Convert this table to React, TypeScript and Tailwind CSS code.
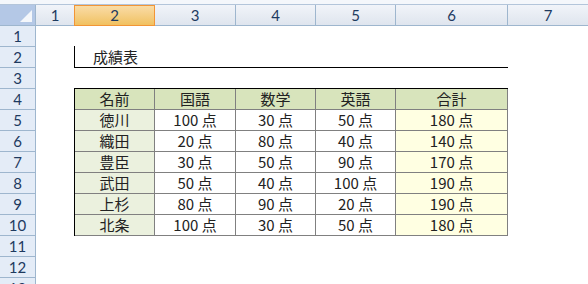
import React from "react";

const colHeaders = [
  { label: "1", w: "w-[38px]", sel: false, br: false },
  { label: "2", w: "w-[81px]", sel: true, br: false },
  { label: "3", w: "w-[81px]", sel: false, br: true },
  { label: "4", w: "w-[80px]", sel: false, br: true },
  { label: "5", w: "w-[80px]", sel: false, br: true },
  { label: "6", w: "w-[112px]", sel: false, br: true },
];

const rows = [
  ["徳川", "100 点", "30 点", "50 点", "180 点"],
  ["織田", "20 点", "80 点", "40 点", "140 点"],
  ["豊臣", "30 点", "50 点", "90 点", "170 点"],
  ["武田", "50 点", "40 点", "100 点", "190 点"],
  ["上杉", "80 点", "90 点", "20 点", "190 点"],
  ["北条", "100 点", "30 点", "50 点", "180 点"],
];

const widths = ["w-[80px]", "w-[81px]", "w-[80px]", "w-[80px]", "w-[112px]"];

export default function App() {
  const jp = { fontFamily: '"Noto Sans CJK JP", "Noto Sans", sans-serif' };
  const hdr = { fontFamily: 'Lato, "Noto Sans", sans-serif' };
  return (
    <div className="w-[588px] h-[284px] overflow-hidden bg-white">
      <div className="h-[5px] bg-[#f4f7fb] border-b border-[#b3c5da]" />
      <div className="flex h-[21px]" style={hdr}>
        <div className="w-[36px] h-[21px] border-r border-b border-[#9eb6ce] bg-[#b4c8e6] flex items-end justify-end pr-[3px] pb-[3px]">
          <svg width="12" height="12" viewBox="0 0 12 12">
            <polygon points="12,0 12,12 0,12" fill="#f4f7fb" />
          </svg>
        </div>
        {colHeaders.map((c) => (
          <div
            key={c.label}
            className={
              c.sel
                ? `${c.w} h-[21px] border border-[#f29536] bg-gradient-to-b from-[#f9dca6] to-[#f1c15f] flex items-center justify-center text-[15px] text-[#1e3a5f]`
                : `${c.w} h-[21px] border-b border-[#9eb6ce] ${c.br ? "border-r" : ""} bg-gradient-to-b from-[#f1f4f9] to-[#dfe5ee] flex items-center justify-center text-[15px] text-[#1e3a5f]`
            }
          >
            {c.label}
          </div>
        ))}
        <div className="flex-1 h-[21px] border-b border-[#9eb6ce] bg-gradient-to-b from-[#f1f4f9] to-[#dfe5ee] flex items-center justify-center text-[15px] text-[#1e3a5f]">
          7
        </div>
      </div>
      <div className="flex">
        <div className="w-[36px] flex flex-col border-r border-[#9eb6ce] bg-[#e4ecf7] shrink-0" style={hdr}>
          {Array.from({ length: 13 }, (_, i) => (
            <div
              key={i}
              className="h-[21px] shrink-0 border-b border-[#9eb6ce] flex items-center justify-center text-[15px] text-[#1e3a5f]"
            >
              {i + 1}
            </div>
          ))}
        </div>
        <div className="flex-1 pl-[38px] pt-[20px]" style={jp}>
          <div className="w-[434px] h-[22px] border-l border-b border-black pl-[18px] text-[15px] leading-[21px] text-[#222]">
            成績表
          </div>
          <div className="mt-[20px] w-[434px] border-t border-l border-black">
            <div className="flex">
              {["名前", "国語", "数学", "英語", "合計"].map((h, i) => (
                <div
                  key={h}
                  className={`${widths[i]} h-[21px] border-r border-b border-[#808080] bg-[#d8e4bc] flex items-center justify-center text-[15px] text-[#222]`}
                >
                  {h}
                </div>
              ))}
            </div>
            {rows.map((r) => (
              <div className="flex" key={r[0]}>
                {r.map((v, i) => (
                  <div
                    key={i}
                    className={`${widths[i]} h-[21px] border-r border-b border-[#808080] flex items-center justify-center text-[15px] text-[#222] ${
                      i === 0 ? "bg-[#ebf1de]" : i === 4 ? "bg-[#ffffe2]" : "bg-white"
                    }`}
                  >
                    {v}
                  </div>
                ))}
              </div>
            ))}
          </div>
        </div>
      </div>
    </div>
  );
}
